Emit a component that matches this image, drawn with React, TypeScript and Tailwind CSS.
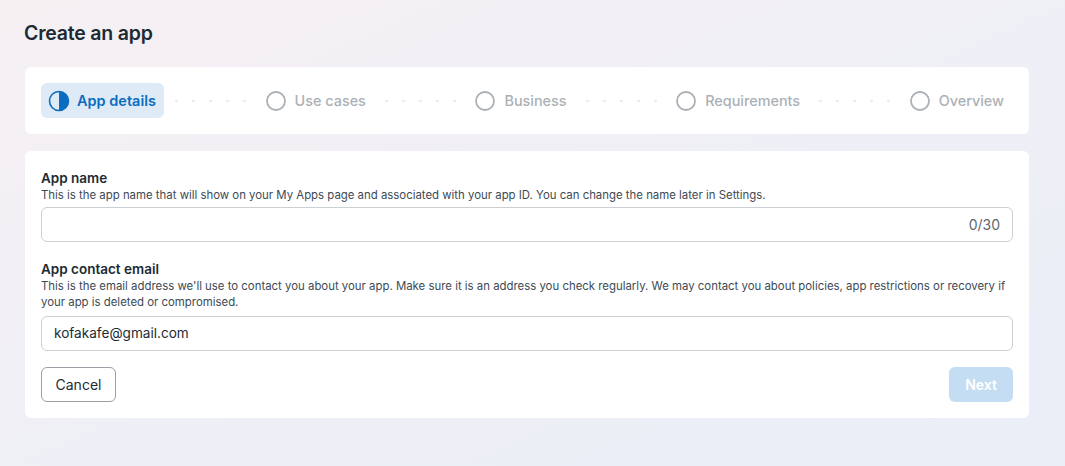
import React from "react";

const steps = ["Use cases", "Business", "Requirements", "Overview"];

function HalfCircle() {
  return (
    <svg width="22" height="22" viewBox="0 0 22 22" className="shrink-0">
      <circle cx="11" cy="11" r="9.5" fill="none" stroke="#0b6cc0" strokeWidth="1.6" />
      <path d="M11 1.5 A9.5 9.5 0 0 1 11 20.5 Z" fill="#0b6cc0" />
    </svg>
  );
}

function EmptyCircle() {
  return (
    <svg width="22" height="22" viewBox="0 0 22 22" className="shrink-0">
      <circle cx="11" cy="11" r="9" fill="none" stroke="#aab0b6" strokeWidth="1.8" />
    </svg>
  );
}

function Dots({ first }: { first?: boolean }) {
  return (
    <div
      className={`flex-1 h-[4px] bg-[radial-gradient(circle,#e9ebee_1px,transparent_1.6px)] bg-[length:17px_4px] bg-repeat-x ${
        first ? "ml-1 mr-3" : "mx-3"
      }`}
    />
  );
}

export default function App() {
  return (
    <div
      className="w-[1065px] h-[466px] overflow-hidden bg-gradient-to-br from-[#f6f0f3] via-[#efeff6] to-[#eaeef7] px-[25px] pt-[19px] text-[#1c2b33]"
      style={{ fontFamily: "Inter, 'Noto Sans', sans-serif" }}
    >
      <h1 className="text-[19.5px] font-semibold leading-[28px] tracking-[-0.2px] -ml-px">Create an app</h1>

      {/* Stepper */}
      <div className="mt-[20px] h-[67px] w-[1004px] bg-white rounded-md px-4 flex items-center">
        <div className="h-[35px] flex items-center gap-[7px] px-[7px] pr-[8px] rounded-md bg-[#deebf7]">
          <HalfCircle />
          <span className="text-[14.5px] font-semibold text-[#0b6cc0]">App details</span>
        </div>
        {steps.map((s, i) => (
          <React.Fragment key={s}>
            <Dots first={i === 0} />
            <div className="flex items-center gap-[8px]">
              <EmptyCircle />
              <span className="text-[14.4px] font-medium text-[#abb1b7]">{s}</span>
            </div>
          </React.Fragment>
        ))}
        <div className="w-[9px]" />
      </div>

      {/* Form */}
      <div className="mt-[17px] w-[1004px] bg-white rounded-md px-4 pt-[18px] pb-4">
        <div className="text-[13.5px] font-semibold leading-[18px]">App name</div>
        <p className="text-[11.4px] leading-[16px] text-[#3d4a54]">
          This is the app name that will show on your My Apps page and associated with your app ID. You can change the name later in Settings.
        </p>
        <div className="mt-[4px] h-[35px] border border-[#ccd0d5] rounded-md flex items-center justify-end px-3">
          <span className="text-[14px] text-[#606770]">0/30</span>
        </div>

        <div className="mt-[18px] text-[13.5px] font-semibold leading-[18px]">App contact email</div>
        <p className="text-[11.4px] leading-[16px] text-[#3d4a54]">
          This is the email address we'll use to contact you about your app. Make sure it is an address you check regularly. We may contact you about policies, app restrictions or recovery if your app is deleted or compromised.
        </p>
        <div className="mt-[6px] h-[35px] border border-[#ccd0d5] rounded-md flex items-center px-3">
          <span className="text-[13.6px] text-[#1c2b33]">kofakafe@gmail.com</span>
        </div>

        <div className="mt-4 flex justify-between">
          <button className="h-[35px] w-[75px] border border-[#9aa0a6] rounded-md text-[14px] text-[#1c2b33]">Cancel</button>
          <button className="h-[35px] w-[64px] rounded-md bg-[#c4ddf2] text-[14px] font-semibold text-white">Next</button>
        </div>
      </div>
    </div>
  );
}
